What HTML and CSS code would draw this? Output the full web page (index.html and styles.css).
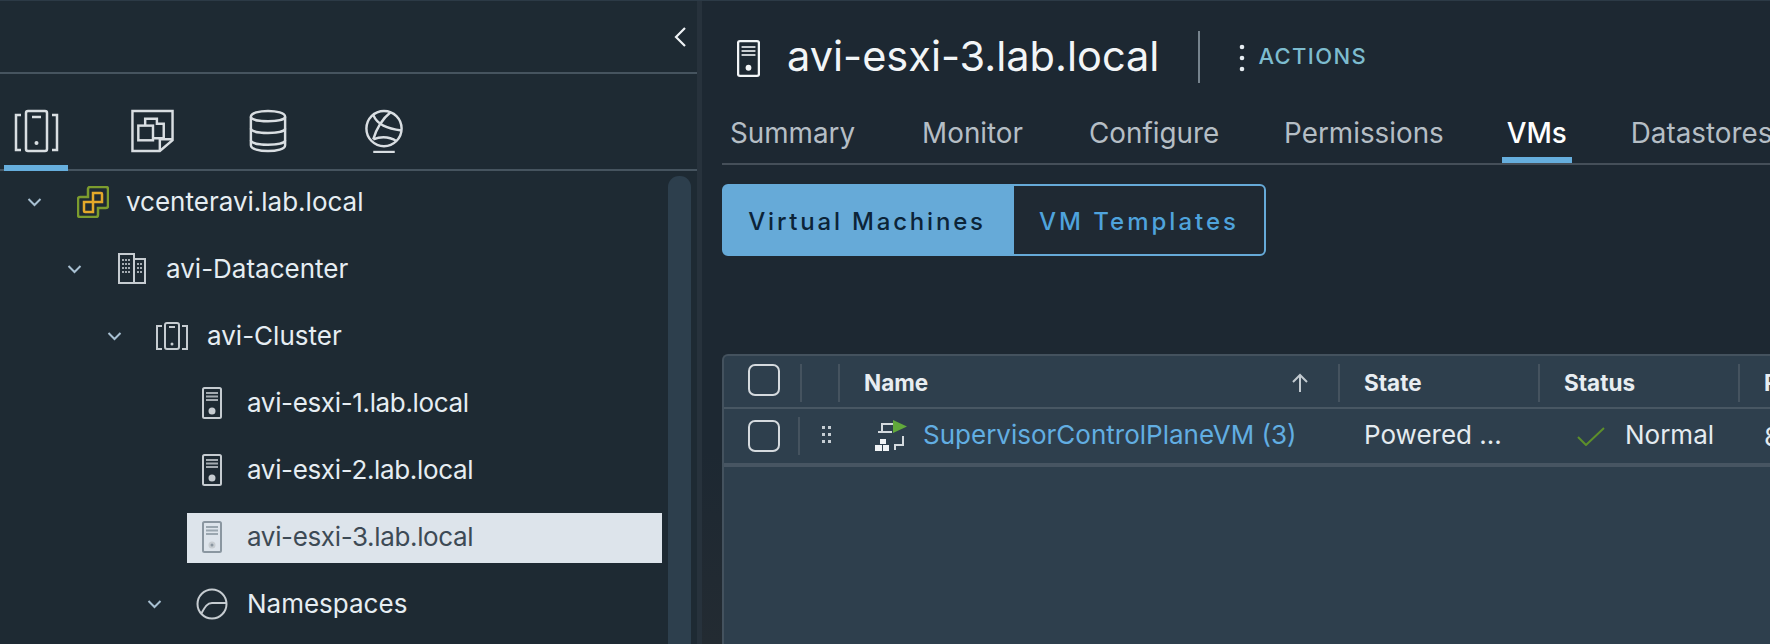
FILE: index.html
```html
<!DOCTYPE html>
<html lang="en">
<head>
  <meta charset="UTF-8" />
  <title>avi-esxi-3.lab.local</title>
  <link rel="stylesheet" href="styles.css">
</head>
<body>
  <div class="app">
    <!-- inventory sidebar -->
    <aside class="sidebar">
      <div class="side-top">
        <svg class="collapse" viewBox="0 0 14 22"><path d="M12 2 3 11l9 9" /></svg>
      </div>
      <div class="side-tabs">
        <div class="side-tab active">
          <svg class="ico-tab" viewBox="0 0 45 42"><path d="M7 5H2v35h5M38 5h5v35h-5" /><rect x="12" y="1" width="21" height="40" rx="2" /><path d="M18 7h9" /><circle cx="22.5" cy="33" r="2" class="fill" /></svg>
        </div>
        <div class="side-tab">
          <svg class="ico-tab" viewBox="0 0 45 45"><path d="M2 2h41v30L30 43H2z" /><path d="M43 31H30v12" /><path d="M15 17V10h12v5h7v15H23" /><rect x="8" y="17" width="15" height="15" /></svg>
        </div>
        <div class="side-tab">
          <svg class="ico-tab db" viewBox="0 0 39 45"><path d="M2 8c0-8 35-8 35 0v29c0 8-35 8-35 0z" /><path d="M2 8c0 6 35 6 35 0M2 20c0 6 35 6 35 0M2 32c0 6 35 6 35 0" /></svg>
        </div>
        <div class="side-tab">
          <svg class="ico-tab globe" viewBox="0 0 40 45"><circle cx="20" cy="20" r="18" /><path d="M9 6c4 10 14 14 29 16M9 31c8-3 16-3 24 2M9 31c3-10 8-20 18-28" /><path d="M9 44h22" /></svg>
        </div>
      </div>
      <div class="tree-wrap">
        <ul class="tree">
          <li class="node lvl0">
            <svg class="chev" viewBox="0 0 14 10"><path d="M1 2l6 6 6-6" /></svg>
            <svg class="ico vc" viewBox="0 0 32 32"><path class="green" d="M13 1h16a2 2 0 0 1 2 2v17a2 2 0 0 1-2 2h-8v7a2 2 0 0 1-2 2H3a2 2 0 0 1-2-2V13a2 2 0 0 1 2-2h8V3a2 2 0 0 1 2-2z" /><path class="yellow" d="M16 7h8a1 1 0 0 1 1 1v8h-9zM7 16h9v10H8a1 1 0 0 1-1-1z" /></svg>
            <span>vcenteravi.lab.local</span>
          </li>
          <li class="node lvl1">
            <svg class="chev" viewBox="0 0 14 10"><path d="M1 2l6 6 6-6" /></svg>
            <svg class="ico dc" viewBox="0 0 28 31"><path d="M1 1h15v29H1zM16 6h11v24H16z" /><path class="dots" d="M4 7h9M4 11h9M4 15h9M4 19h9M19 11h6M19 15h6M19 19h6" /></svg>
            <span>avi-Datacenter</span>
          </li>
          <li class="node lvl2">
            <svg class="chev" viewBox="0 0 14 10"><path d="M1 2l6 6 6-6" /></svg>
            <svg class="ico cl" viewBox="0 0 32 28"><path d="M6 4H1v23h5M26 4h5v23h-5" /><rect x="9" y="1" width="14" height="26" rx="2" /><path d="M13 5h6" /><circle cx="16" cy="22" r="1.5" class="fill" /></svg>
            <span>avi-Cluster</span>
          </li>
          <li class="node lvl3">
            <svg class="ico host" viewBox="0 0 20 32"><use href="#host" /></svg>
            <span>avi-esxi-1.lab.local</span>
          </li>
          <li class="node lvl3">
            <svg class="ico host" viewBox="0 0 20 32"><use href="#host" /></svg>
            <span>avi-esxi-2.lab.local</span>
          </li>
          <li class="node lvl3 selected">
            <svg class="ico host" viewBox="0 0 20 32"><use href="#host" /></svg>
            <span>avi-esxi-3.lab.local</span>
          </li>
          <li class="node lvl2b">
            <svg class="chev" viewBox="0 0 14 10"><path d="M1 2l6 6 6-6" /></svg>
            <svg class="ico ns" viewBox="0 0 32 32"><circle cx="16" cy="16" r="14.5" /><path d="M5 26c4-7 6-11 11-11h14" /></svg>
            <span>Namespaces</span>
          </li>
        </ul>
        <div class="scrollbar"></div>
      </div>
    </aside>

    <!-- object view -->
    <main class="content">
      <header class="obj-head">
        <svg class="obj-icon" viewBox="0 0 20 32"><use href="#host" /></svg>
        <h1>avi-esxi-3.lab.local</h1>
        <div class="actions">
          <svg class="kebab" viewBox="0 0 6 28"><circle cx="3" cy="3" r="2.3" /><circle cx="3" cy="14" r="2.3" /><circle cx="3" cy="25" r="2.3" /></svg>
          <span>ACTIONS</span>
        </div>
      </header>

      <nav class="tabs">
        <a class="tab t-summary">Summary</a>
        <a class="tab t-monitor">Monitor</a>
        <a class="tab t-configure">Configure</a>
        <a class="tab t-permissions">Permissions</a>
        <a class="tab t-vms active">VMs</a>
        <a class="tab t-datastores">Datastores</a>
      </nav>

      <div class="btn-group">
        <button class="seg on">Virtual Machines</button>
        <button class="seg">VM Templates</button>
      </div>

      <section class="grid">
        <div class="row head">
          <div class="c-check"><span class="check"></span></div>
          <div class="c-drag"></div>
          <div class="c-name">Name
            <svg class="sort" viewBox="0 0 16 20"><path d="M8 19V2M1 9l7-7 7 7" /></svg>
          </div>
          <div class="c-state">State</div>
          <div class="c-status">Status</div>
          <div class="c-prov">P</div>
        </div>
        <div class="row body">
          <div class="c-check"><span class="check"></span></div>
          <div class="c-drag">
            <svg class="grip" viewBox="0 0 9 17"><path d="M0 0h3v3H0zM6 0h3v3H6zM0 7h3v3H0zM6 7h3v3H6zM0 14h3v3H0zM6 14h3v3H6z" /></svg>
          </div>
          <div class="c-name">
            <svg class="vm-icon" viewBox="0 0 32 32">
              <path class="line" d="M7 12V5h11M3 13h14M28 17v9h-8v5" />
              <path class="solid" d="M5 20h6v5H5zM0 26h7v6H0zM8 26h6v6H8z" />
              <path class="play" d="M18 1v13l14-6.500z" />
            </svg>
            <a class="link">SupervisorControlPlaneVM (3)</a>
          </div>
          <div class="c-state">Powered ...</div>
          <div class="c-status">
            <svg class="ok" viewBox="0 0 28 19"><path d="M1 10l8 8L27 1" /></svg>
            <span>Normal</span>
          </div>
          <div class="c-prov">8</div>
        </div>
      </section>
    </main>
  </div>

  <!-- shared host icon -->
  <svg class="defs" aria-hidden="true">
    <symbol id="host" viewBox="0 0 20 32">
      <rect x="1" y="1" width="18" height="30" rx="1.500" fill="none" stroke="currentColor" stroke-width="2" />
      <path d="M4 6h12M4 9.500h12M4 13h12" stroke="currentColor" stroke-width="1.800" opacity=".8" />
      <circle cx="10" cy="24" r="2.500" fill="currentColor" />
    </symbol>
  </svg>
</body>
</html>
```

FILE: styles.css
```css
* {
  box-sizing: border-box;
}

html, body {
  margin: 0;
  padding: 0;
  height: 100%;
  overflow: hidden;
  background: #1d2832;
  font-family: Inter, "Liberation Sans", sans-serif;
  color: #e4ebf0;
}

svg {
  display: block;
  flex: none;
  fill: none;
}

.defs {
  width: 0;
  height: 0;
}

.app {
  display: flex;
  height: 644px;
  border-top: 1px solid #2c3a46;
}

/* sidebar */
.sidebar {
  width: 702px;
  flex: none;
  background: #1e2a33;
  border-right: 5px solid #27323c;
  display: flex;
  flex-direction: column;
}

.side-top {
  height: 73px;
  flex: none;
  border-bottom: 2px solid #46545f;
  display: flex;
  align-items: center;
  justify-content: flex-end;
  padding: 0 10px 0 0;
}

.collapse {
  width: 14px;
  height: 22px;
  stroke: #eef2f5;
  stroke-width: 2.2;
}

.side-tabs {
  height: 97px;
  flex: none;
  display: flex;
  border-bottom: 2px solid #46545f;
  padding-left: 4px;
}

.side-tab {
  width: 64px;
  height: 97px;
  margin-right: 52px;
  display: flex;
  justify-content: center;
  padding-top: 35px;
}

.side-tab.active {
  border-bottom: 6px solid #66aedd;
}

.ico-tab {
  width: 45px;
  height: 44px;
  stroke: #d9dee2;
  stroke-width: 2.5;
}

.ico-tab .fill {
  fill: #d9dee2;
  stroke: none;
}

.ico-tab.db,
.ico-tab.globe {
  width: 40px;
}

.tree-wrap {
  flex: 1;
  position: relative;
  overflow: hidden;
}

.tree {
  list-style: none;
  margin: 0;
  padding: 0;
}

.node {
  height: 50px;
  margin-bottom: 17px;
  display: flex;
  align-items: center;
  font-size: 26px;
  color: #e6edf2;
}

.node span {
  padding-bottom: 3px;
}

.node:first-child {
  margin-top: 7px;
}

.chev {
  width: 15px;
  height: 10px;
  stroke: #a8c0d2;
  stroke-width: 2;
  margin: 0 34px 2px 0;
}

.lvl0 { padding-left: 27px; }
.lvl1 { padding-left: 67px; }
.lvl2 { padding-left: 107px; }
.lvl2b { padding-left: 147px; }
.lvl3 { margin-left: 187px; width: 475px; padding-left: 15px; letter-spacing: -.35px; }

.lvl0 .chev { margin-right: 35px; }
.lvl1 .chev { margin-right: 36px; }

.ico {
  margin: 0 19px 3px 0;
  stroke: #c6ccd1;
  stroke-width: 2;
  color: #c6ccd1;
}

.vc { width: 32px; height: 32px; margin-right: 17px; stroke-width: 2.5; }
.vc .green { stroke: #7c9c2e; }
.vc .yellow { stroke: #e3a82a; }
.dc { width: 28px; height: 31px; margin-right: 20px; }
.dc .dots { stroke-dasharray: 2 1; stroke-width: 2; opacity: .8; }
.cl { width: 32px; height: 28px; }
.cl .fill { fill: #c6ccd1; stroke: none; }
.host { width: 20px; height: 32px; margin-right: 25px; }
.ns { width: 32px; height: 32px; }

.node.selected {
  background: #dde4eb;
  color: #3d4a55;
}

.node.selected .ico {
  color: #8a96a0;
}

.scrollbar {
  position: absolute;
  left: 668px;
  top: 5px;
  width: 23px;
  bottom: -20px;
  border-radius: 11px;
  background: #2d3f4d;
}

/* main */
.content {
  flex: 1;
  min-width: 0;
  padding-left: 20px;
  background: linear-gradient(#1d2832 70%, #232b32);
}

.obj-head {
  height: 91px;
  display: flex;
  align-items: center;
  padding-left: 14px;
}

.obj-icon {
  width: 25px;
  height: 37px;
  color: #f2f5f7;
  margin: 24px 26px 0 0;
}

h1 {
  margin: 20px 0 0;
  font-size: 41.5px;
  font-weight: 400;
  color: #f2f5f7;
  padding-right: 39px;
  border-right: 2px solid #76838d;
  height: 52px;
  line-height: 50px;
  white-space: nowrap;
}

.actions {
  display: flex;
  align-items: center;
  margin: 19px 0 0 39px;
  color: #7dbccf;
  font-size: 22px;
  letter-spacing: 1.4px;
  font-weight: 500;
}

.kebab {
  width: 6px;
  height: 28px;
  fill: #e6edf2;
  margin: 3px 13px 0 0;
}

.tabs {
  height: 73px;
  display: flex;
  border-bottom: 2px solid #454f59;
  color: #b5bec5;
  font-size: 27.8px;
  white-space: nowrap;
  overflow: hidden;
}

.tab {
  height: 71px;
  padding-top: 23px;
  line-height: 36px;
}

.t-summary { margin-left: 8px; margin-right: 67px; }
.t-monitor { margin-right: 66px; }
.t-configure { margin-right: 65px; }
.t-permissions { margin-right: 58px; }
.t-vms { margin-right: 59px; padding: 23px 5px 0; }

.tab.active {
  color: #fff;
  font-weight: 500;
  border-bottom: 6px solid #66aedd;
}

.btn-group {
  display: flex;
  width: 544px;
  height: 72px;
  margin-top: 19px;
}

.seg {
  font-family: inherit;
  font-size: 24px;
  font-weight: 500;
  letter-spacing: 3px;
  border: 2px solid #66aad8;
  background: #1f2933;
  color: #4fa3dc;
  padding: 2px 0 0;
  border-radius: 0 6px 6px 0;
  flex: 1;
}

.seg.on {
  flex: none;
  width: 290px;
  background: #66aad8;
  color: #0c2438;
  border-radius: 6px 0 0 6px;
  letter-spacing: 2.8px;
}

/* table */
.grid {
  margin-top: 98px;
  height: 300px;
  background: #2e3f4d;
  border: 2px solid #44525e;
  border-right: 0;
  border-bottom: 0;
  border-radius: 6px 0 0 0;
  font-size: 22.5px;
}

.row {
  display: flex;
  align-items: center;
}

.row.head {
  height: 53px;
  padding-top: 2px;
  border-bottom: 2px solid #485763;
  font-weight: 700;
  color: #e8edf1;
}

.row.head .check {
  margin-top: -6px;
}

.row.body {
  height: 58px;
  border-bottom: 4px solid #475562;
  font-size: 26px;
}

.row > div {
  display: flex;
  flex: none;
  align-items: center;
  height: 38px;
  white-space: nowrap;
}

.row.body .link,
.row.body .c-state,
.row.body .c-status span {
  padding-bottom: 3px;
}

.c-check { width: 78px; padding-left: 24px; border-right: 2px solid #45535f; }
.c-drag { width: 38px; border-right: 2px solid #45535f; padding-left: 22px; }
.c-name { width: 500px; padding-left: 24px; border-right: 2px solid #45535f; position: relative; }
.c-state { width: 200px; padding-left: 24px; border-right: 2px solid #45535f; }
.c-status { width: 200px; padding-left: 24px; border-right: 2px solid #45535f; }
.c-prov { padding-left: 24px; }

.row.body .c-check { width: 76px; }
.row.body .c-drag { width: 40px; }
.row.body .c-drag,
.row.body .c-name,
.row.body .c-state,
.row.body .c-status { border-right-color: transparent; }

.check {
  width: 32px;
  height: 32px;
  border: 2px solid #d5dade;
  border-radius: 7px;
  display: block;
}

.sort {
  position: absolute;
  left: 452px;
  top: 9px;
  width: 16px;
  height: 20px;
  stroke: #c2cad0;
  stroke-width: 2;
}

.grip {
  width: 9px;
  height: 17px;
  fill: #c6ced4;
  margin-bottom: 3px;
}

.row.body .c-name { padding-left: 35px; }

.vm-icon {
  width: 32px;
  height: 32px;
  margin: 0 16px 3px 0;
}

.vm-icon .line { stroke: #d4dade; stroke-width: 2; }
.vm-icon .solid { fill: #f0f3f5; }
.vm-icon .play { fill: #62a93c; }

.link {
  color: #62aee2;
}

.ok {
  width: 28px;
  height: 19px;
  stroke: #5d8f2a;
  stroke-width: 2;
  margin: 0 20px 0 13px;
}
```
